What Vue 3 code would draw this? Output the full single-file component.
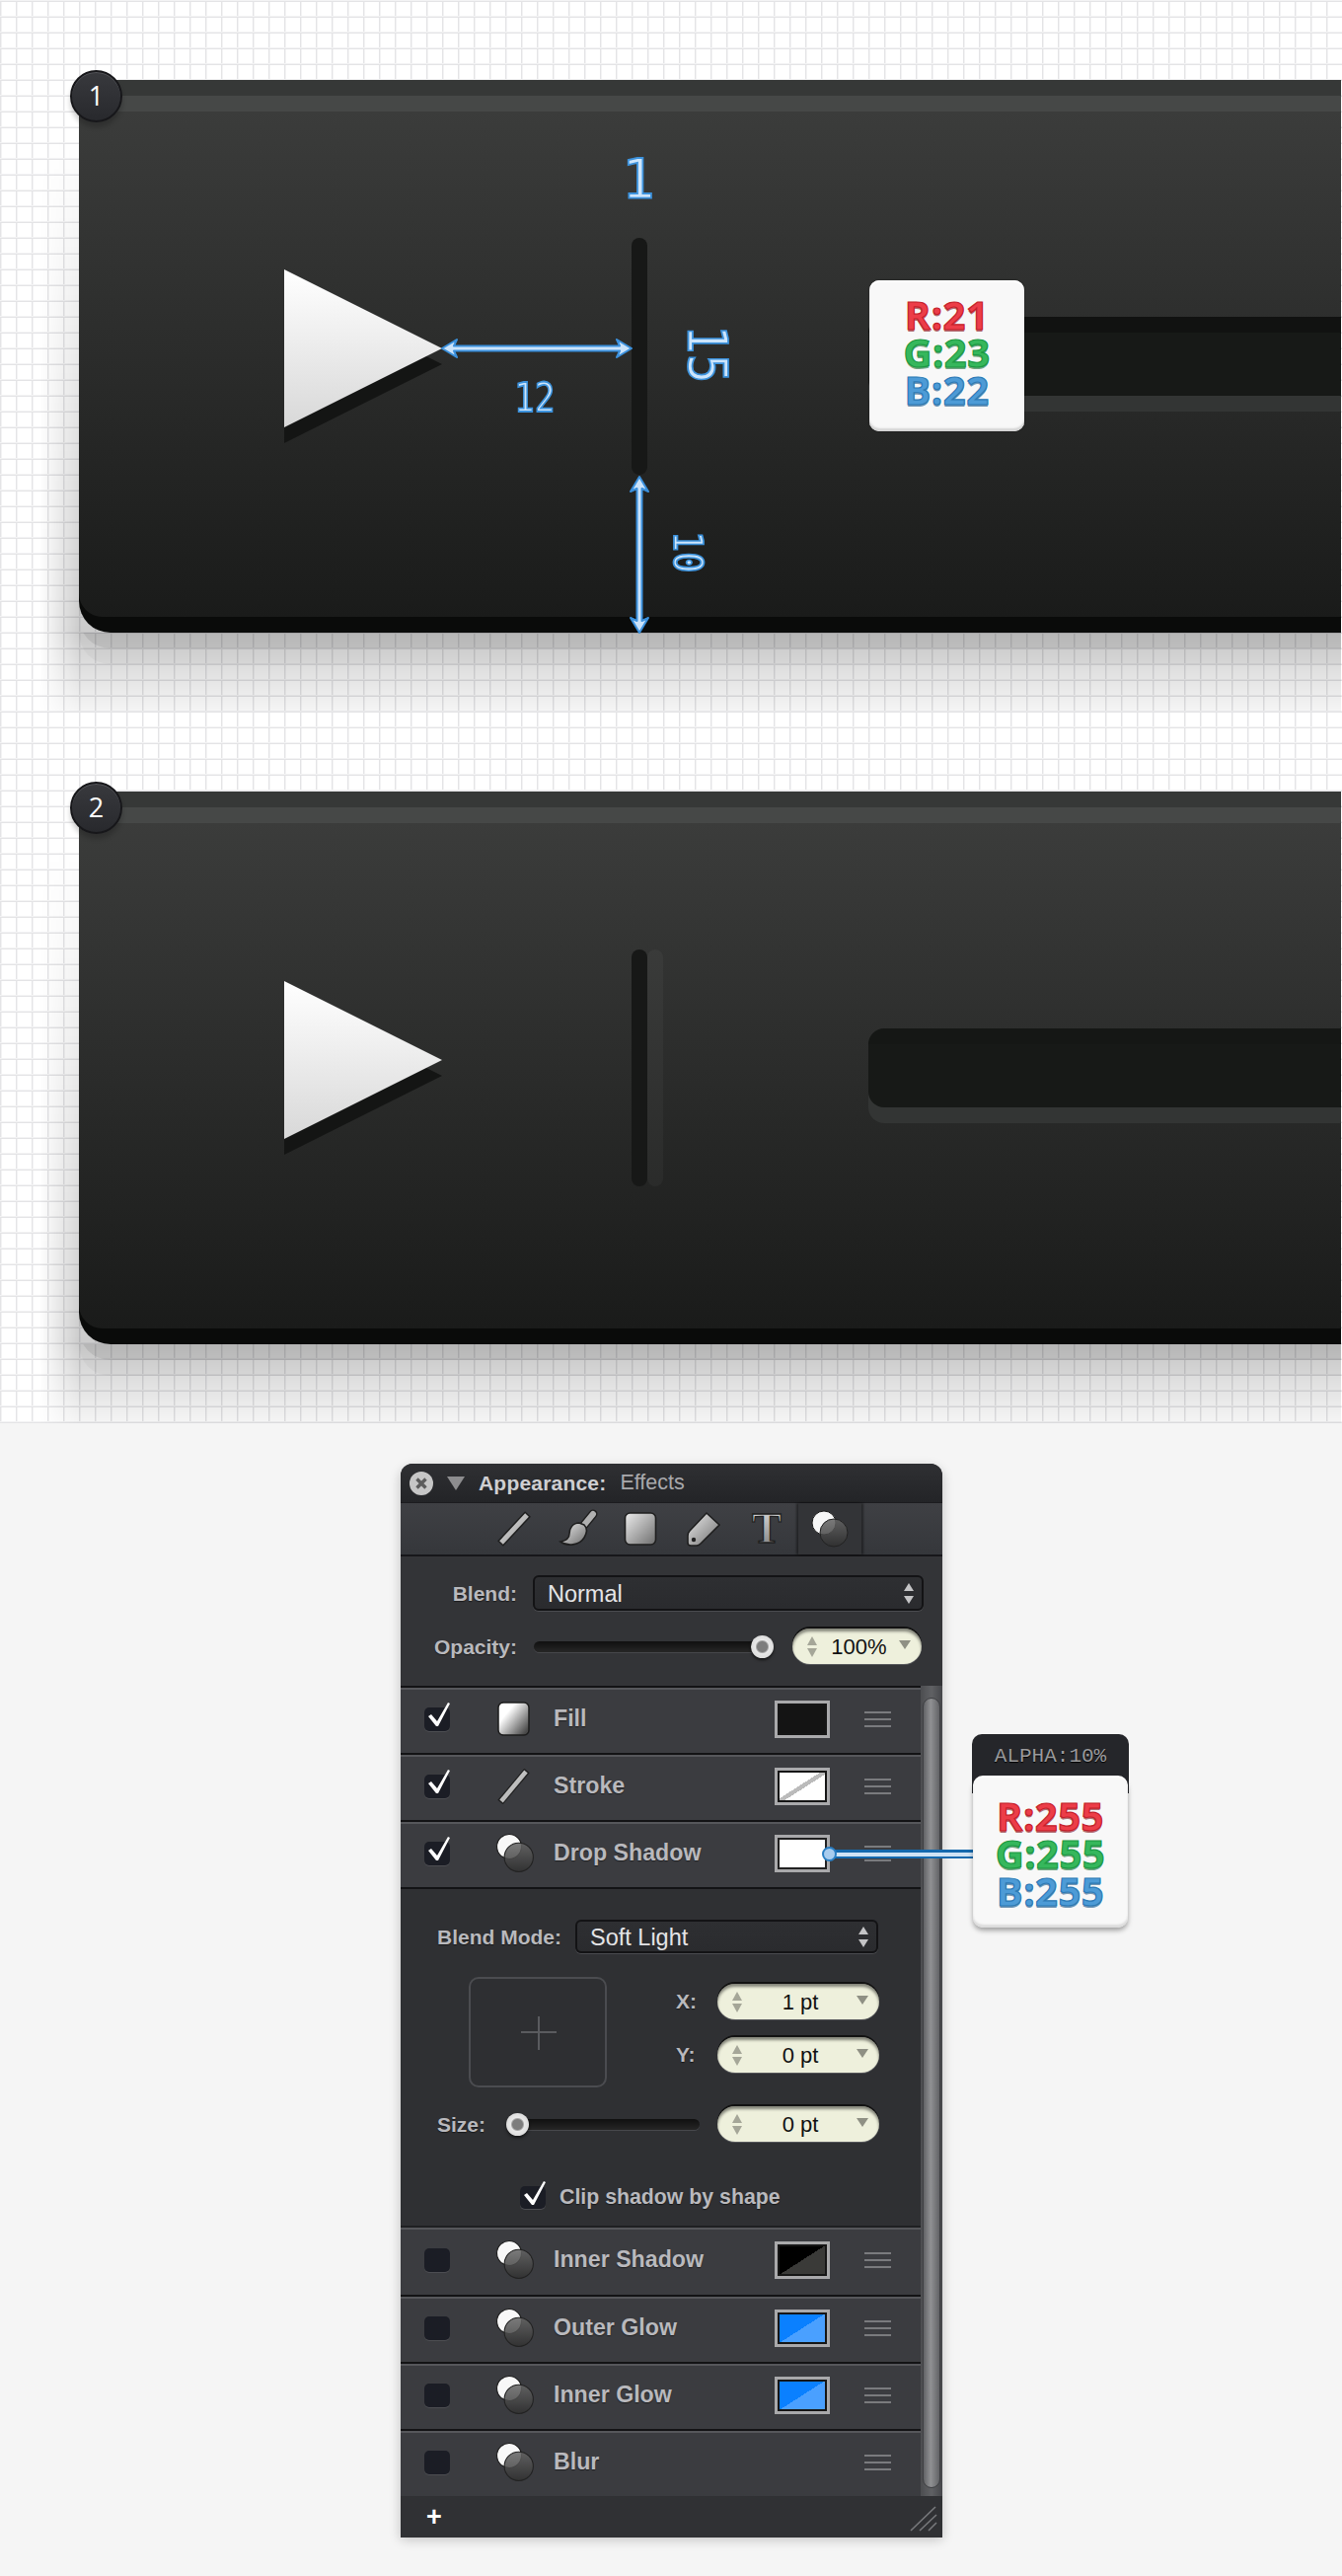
<template>
	<div class="page">
		<svg class="defs" width="0" height="0">
			<defs>
				<linearGradient id="g-tool" x1="0" y1="0" x2="1" y2="1">
					<stop offset="0" stop-color="#ececec" />
					<stop offset="1" stop-color="#6e6e6e" />
				</linearGradient>
				<linearGradient id="g-line" gradientUnits="userSpaceOnUse" x1="4" y1="4" x2="32" y2="32">
					<stop offset="0" stop-color="#d8d8d8" />
					<stop offset="1" stop-color="#a0a0a0" />
				</linearGradient>
				<linearGradient id="g-fill" x1="0.1" y1="0.2" x2="0.9" y2="0.9">
					<stop offset="0.2" stop-color="#ffffff" />
					<stop offset="1" stop-color="#4a4a4a" />
				</linearGradient>
				<linearGradient id="g-play" x1="0" y1="0" x2="0" y2="1">
					<stop offset="0" stop-color="#ffffff" />
					<stop offset="1" stop-color="#d8d8d8" />
				</linearGradient>
				<linearGradient id="g-orb" x1="0" y1="0" x2="0" y2="1">
					<stop offset="0" stop-color="#666666" />
					<stop offset="1" stop-color="#303030" />
				</linearGradient>
				<linearGradient id="g-t" x1="0" y1="0" x2="0" y2="1">
					<stop offset="0" stop-color="#e4e4e4" />
					<stop offset="1" stop-color="#7a7a7a" />
				</linearGradient>
			</defs>
		</svg>

		<section class="canvas">
			<div class="sheet">
				<div class="badge">1</div>
				<div class="panel">
					<div class="stripe-a"></div>
					<div class="stripe-b"></div>
					<div class="stage">
						<svg class="play" width="160" height="176" viewBox="0 0 160 176">
							<polygon points="0,16 160,96 0,176" fill="#141514" />
							<polygon points="0,0 160,80 0,160" fill="url(#g-play)" />
						</svg>
						<div class="bar"></div>
						<div class="slot"></div>
					</div>
				</div>
				<span class="dim dim-big dim-one">1</span>
				<span class="dim dim-small dim-twelve">12</span>
				<span class="dim dim-big dim-side dim-fifteen">15</span>
				<span class="dim dim-small dim-side dim-ten">10</span>
				<svg class="arrow-h" width="196" height="24" viewBox="0 0 196 24">
					<path class="arrow-path" d="M2,12 L17,3 L14,9.5 L182,9.5 L179,3 L194,12 L179,21 L182,14.5 L14,14.5 L17,21 Z" />
				</svg>
				<svg class="arrow-v" width="24" height="162" viewBox="0 0 24 162">
					<path class="arrow-path" d="M12,2 L3,17 L9.5,14 L9.5,148 L3,145 L12,160 L21,145 L14.5,148 L14.5,14 L21,17 Z" />
				</svg>
				<div class="rgb-card">
					<div class="rgb r">R:21</div>
					<div class="rgb g">G:23</div>
					<div class="rgb b">B:22</div>
				</div>
			</div>

			<div class="sheet sheet-two">
				<div class="badge">2</div>
				<div class="panel">
					<div class="stripe-a"></div>
					<div class="stripe-b"></div>
					<div class="stage">
						<svg class="play" width="160" height="176" viewBox="0 0 160 176">
							<polygon points="0,16 160,96 0,176" fill="#141514" />
							<polygon points="0,0 160,80 0,160" fill="url(#g-play)" />
						</svg>
						<div class="bar bar-lit"></div>
						<div class="slot slot-lit"></div>
					</div>
				</div>
			</div>
		</section>

		<section class="lower">
			<div class="inspector">
				<header class="title-bar">
					<svg class="close" width="24" height="24" viewBox="0 0 24 24">
						<circle cx="12" cy="12" r="12" fill="#c6c6c6" />
						<path d="M7.5 7.5 L16.5 16.5 M16.5 7.5 L7.5 16.5" stroke="#5c5c5c" stroke-width="3.4" />
					</svg>
					<i class="disclosure"></i>
					<strong class="title">Appearance:</strong>
					<span class="subtitle">Effects</span>
				</header>

				<nav class="toolbar">
					<div class="tool">
						<svg width="36" height="36" viewBox="0 0 36 36">
							<path d="M4 33 L32 3" stroke="#1f1f1f" stroke-width="8" />
							<path d="M5 32 L31 4" stroke="url(#g-line)" stroke-width="5" />
						</svg>
					</div>
					<div class="tool">
						<svg width="38" height="36" viewBox="0 0 38 36">
							<path d="M35 3 L26 14" stroke="#1f1f1f" stroke-width="9" stroke-linecap="round" />
							<path d="M35 3 L26 14" stroke="#b0b0b0" stroke-width="6" stroke-linecap="round" />
							<path d="M21 12 C14 12 11 18 11 23 C11 28 7 30 2 31 C9 36 21 35 26 27 C29 22 29 17 26 14 Z" fill="url(#g-tool)" stroke="#1f1f1f" stroke-width="1.6" />
						</svg>
					</div>
					<div class="tool">
						<svg width="34" height="36" viewBox="0 0 34 36">
							<rect x="1.5" y="2" width="31" height="32" rx="5" fill="url(#g-tool)" stroke="#1f1f1f" stroke-width="1.6" />
						</svg>
					</div>
					<div class="tool">
						<svg width="36" height="36" viewBox="0 0 36 36">
							<path d="M21 2 L34 14 L15 33 Q13 35 11 35 L5 35 Q2 35 2 32 L2 25 Q2 22 4 20 Z" fill="url(#g-tool)" stroke="#1f1f1f" stroke-width="1.6" />
							<circle cx="8" cy="29" r="2.2" fill="#222" />
						</svg>
					</div>
					<div class="tool">
						<svg width="40" height="42" viewBox="0 0 40 42">
							<text class="tool-t" x="20" y="35" text-anchor="middle" fill="url(#g-t)" stroke="#1f1f1f" stroke-width="1.3">T</text>
						</svg>
					</div>
					<div class="tool tool-on">
						<svg width="38" height="38" viewBox="0 0 38 38">
							<circle cx="13" cy="13" r="12" fill="#f6f6f6" stroke="#1b1b1b" stroke-width="1" />
							<circle cx="23" cy="23" r="14" fill="url(#g-orb)" fill-opacity="0.86" stroke="#222" stroke-width="1" />
						</svg>
					</div>
				</nav>

				<div class="global">
					<div class="line line-blend">
						<label class="label label-wide">Blend:</label>
						<div class="select select-main">
							<span>Normal</span>
							<i class="updown"><b></b><u></u></i>
						</div>
					</div>
					<div class="line line-opacity">
						<label class="label label-wide">Opacity:</label>
						<div class="track track-opacity"><i class="thumb thumb-end"></i></div>
						<div class="field field-short">
							<i class="stepper"><b></b><u></u></i>
							<span>100%</span>
							<i class="caret"></i>
						</div>
					</div>
				</div>

				<div class="list-wrap">
					<div class="list">
						<template v-for="row in rows" :key="row.name">
							<div class="row">
								<div class="check"><svg v-if="row.on" width="28" height="34" viewBox="0 0 28 34"><path d="M4 17 L7 15 L13 22 L24 3 L26 4 L14 27 L12 27 Z" /></svg></div>
								<div class="row-icon">
									<svg v-if="row.icon === 'fill'" width="36" height="36" viewBox="0 0 36 36">
										<rect x="1" y="1" width="31" height="33" rx="5" fill="url(#g-fill)" stroke="#1c1c1c" stroke-width="1.5" />
									</svg>
									<svg v-else-if="row.icon === 'stroke'" width="36" height="36" viewBox="0 0 36 36">
										<path d="M3 34 L30 2" stroke="#1f1f1f" stroke-width="7" />
										<path d="M4 33 L29 3" stroke="url(#g-line)" stroke-width="4.5" />
									</svg>
									<svg v-else class="orb" width="39" height="39" viewBox="0 0 36 36">
										<circle cx="12" cy="12" r="11.5" fill="#f8f8f8" stroke="#1b1b1b" stroke-width="1" />
										<circle cx="21" cy="22" r="13.5" fill="url(#g-orb)" fill-opacity="0.86" stroke="#222" stroke-width="1" />
									</svg>
								</div>
								<span class="row-name">{{row.name}}</span>
								<div v-if="row.swatch" class="swatch" :class="'swatch-' + row.swatch"></div>
								<div class="handle"><i></i><i></i><i></i></div>
							</div>
							<div v-if="row.name === 'Drop Shadow'" class="details">
								<div class="line line-mode">
									<label class="label label-low">Blend Mode:</label>
									<div class="select select-mode">
										<span>Soft Light</span>
										<i class="updown"><b></b><u></u></i>
									</div>
								</div>
								<div class="offset">
									<div class="pad"><i class="cross-h"></i><i class="cross-v"></i></div>
									<div class="offset-fields">
										<div class="line">
											<label class="label axis">X:</label>
											<div class="field">
												<i class="stepper"><b></b><u></u></i>
												<span>1 pt</span>
												<i class="caret"></i>
											</div>
										</div>
										<div class="line">
											<label class="label axis">Y:</label>
											<div class="field">
												<i class="stepper"><b></b><u></u></i>
												<span>0 pt</span>
												<i class="caret"></i>
											</div>
										</div>
									</div>
								</div>
								<div class="line line-size">
									<label class="label label-low">Size:</label>
									<div class="track track-size"><i class="thumb thumb-start"></i></div>
									<div class="field">
										<i class="stepper"><b></b><u></u></i>
										<span>0 pt</span>
										<i class="caret"></i>
									</div>
								</div>
								<div class="line line-clip">
									<div class="check check-small"><svg width="28" height="34" viewBox="0 0 28 34"><path d="M4 17 L7 15 L13 22 L24 3 L26 4 L14 27 L12 27 Z" /></svg></div>
									<span class="label clip-text">Clip shadow by shape</span>
								</div>
							</div>
						</template>
					</div>
					<div class="scrollbar"><div class="scroll-thumb"></div></div>
				</div>

				<footer class="footer">
					<span class="plus">+</span>
					<svg class="grip" width="28" height="26" viewBox="0 0 28 26">
						<path d="M1 25 L26 1 M10 25 L27 9 M19 25 L27 17" stroke="#77787b" stroke-width="1.6" />
					</svg>
				</footer>

				<div class="wire"><i class="wire-dot"></i></div>
				<div class="pop">
					<div class="pop-tab">ALPHA:10%</div>
					<div class="pop-card">
						<div class="rgb r">R:255</div>
						<div class="rgb g">G:255</div>
						<div class="rgb b">B:255</div>
					</div>
				</div>
			</div>
		</section>
	</div>
</template>

<script setup>
	const rows = [
		{ name: "Fill", on: true, icon: "fill", swatch: "black" },
		{ name: "Stroke", on: true, icon: "stroke", swatch: "none" },
		{ name: "Drop Shadow", on: true, icon: "shadow", swatch: "white" },
		{ name: "Inner Shadow", on: false, icon: "shadow", swatch: "split" },
		{ name: "Outer Glow", on: false, icon: "shadow", swatch: "blue" },
		{ name: "Inner Glow", on: false, icon: "shadow", swatch: "blue" },
		{ name: "Blur", on: false, icon: "shadow", swatch: null },
	];
</script>

<style>
	html, body
	{
		margin: 0;
		background: #f5f5f5;
	}
</style>

<style scoped>
	.page
	{
		width: 1360px;
		height: 2610px;
		overflow: hidden;
		font-family: "Liberation Sans", Arial, sans-serif;
	}

	.defs
	{
		position: absolute;
	}

	.canvas
	{
		height: 1442px;
		box-sizing: border-box;
		padding: 81px 1px 0 80px;
		background-color: #fff;
		background-image:
			linear-gradient(#f3f3f4 1px, #e4e4e6 1px, #e4e4e6 2px, transparent 2px),
			linear-gradient(90deg, #e4e4e6 1px, #f3f3f4 1px, #f3f3f4 2px, transparent 2px);
		background-size: 16px 16px;
	}

	.sheet
	{
		position: relative;
		height: 560px;
	}

	.sheet-two
	{
		margin-top: 161px;
	}

	.sheet::before
	{
		content: "";
		position: absolute;
		left: -40px;
		right: 0;
		top: 56px;
		bottom: -80px;
		background: linear-gradient(rgba(0, 0, 0, 0), rgba(0, 0, 0, .2) 86%, rgba(0, 0, 0, .04));
		-webkit-mask-image: linear-gradient(90deg, transparent, #000 40px);
		mask-image: linear-gradient(90deg, transparent, #000 40px);
	}

	.panel
	{
		position: relative;
		height: 560px;
		display: flex;
		flex-direction: column;
		overflow: hidden;
		background: #0a0b0a;
		border-radius: 32px 0 0 32px;
	}

	.sheet::after
	{
		content: "";
		position: absolute;
		left: 0;
		right: 0;
		top: 0;
		height: 560px;
		border-radius: 32px 0 0 32px;
		box-shadow: 0 16px 0 rgba(0, 0, 0, .08), 0 32px 0 rgba(0, 0, 0, .03);
		pointer-events: none;
		clip-path: inset(100% 0 -40px 0);
	}

	.stripe-a
	{
		height: 16px;
		background: #363837;
	}

	.stripe-b
	{
		height: 16px;
		background: #464847;
	}

	.stage
	{
		flex: 1;
		margin-bottom: 16px;
		display: flex;
		align-items: flex-start;
		background: linear-gradient(#3b3c3b, #1a1b1a);
		border-radius: 0 0 0 24px;
	}

	.play
	{
		margin: 160px 0 0 208px;
		flex: none;
	}

	.bar
	{
		flex: none;
		margin: 128px 0 0 192px;
		width: 16px;
		height: 240px;
		border-radius: 8px;
		background: #171817;
	}

	.bar-lit
	{
		box-shadow: 16px 0 0 rgba(255, 255, 255, .035);
	}

	.slot
	{
		flex: 1;
		margin: 208px 0 0 224px;
		height: 80px;
		box-sizing: border-box;
		border-top: 16px solid #111211;
		background: #171917;
		border-radius: 16px 0 0 16px;
		box-shadow: 0 16px 0 #333534;
	}

	.slot-lit
	{
		border-top-color: #151715;
	}

	.badge
	{
		position: absolute;
		z-index: 3;
		left: -9px;
		top: -10px;
		width: 53px;
		height: 53px;
		box-sizing: border-box;
		border: 2px solid #17171a;
		border-radius: 50%;
		background: linear-gradient(#38393d, #28292d);
		box-shadow: 0 5px 5px rgba(0, 0, 0, .2), inset 0 1px 0 #55565a;
		color: #fff;
		font: 27px/47px "Open Sans", sans-serif;
		text-align: center;
	}

	.dim
	{
		position: absolute;
		z-index: 2;
		font-family: "DejaVu Sans Mono", monospace;
		line-height: 1;
		color: #cde5fb;
		-webkit-text-stroke: 1.8px #3c92dc;
		transform-origin: 0 0;
		white-space: nowrap;
	}

	.dim-big
	{
		font-size: 56px;
	}

	.dim-small
	{
		font-size: 41px;
	}

	.dim-one
	{
		left: 550px;
		top: 72px;
	}

	.dim-twelve
	{
		left: 441px;
		top: 302px;
		transform: scaleX(.84);
	}

	.dim-side
	{
		writing-mode: vertical-rl;
	}

	.dim-fifteen
	{
		left: 609px;
		top: 248px;
		transform: scaleY(.88);
	}

	.dim-ten
	{
		left: 596px;
		top: 457px;
		transform: scaleY(.86);
	}

	.arrow-h
	{
		position: absolute;
		z-index: 2;
		left: 366px;
		top: 260px;
	}

	.arrow-v
	{
		position: absolute;
		z-index: 2;
		left: 556px;
		top: 400px;
	}

	.arrow-path
	{
		fill: #cbe3fa;
		stroke: #3b90dc;
		stroke-width: 2;
		stroke-linejoin: round;
	}

	.rgb-card
	{
		position: absolute;
		z-index: 2;
		left: 801px;
		top: 203px;
		width: 157px;
		height: 153px;
		box-sizing: border-box;
		padding-top: 16px;
		border-radius: 10px;
		background: #f8f8f8;
		box-shadow: inset 0 -3px 2px #d4d4d4, inset 0 2px 1px #fff, 0 0 2px rgba(0, 0, 0, .4);
		text-align: center;
	}

	.rgb
	{
		font: 700 40px/38px "Open Sans", sans-serif;
		letter-spacing: .5px;
	}

	.rgb.r
	{
		color: #ec3d48;
		-webkit-text-stroke: 1.2px #c51f2b;
		text-shadow: 0 2px 0 rgba(130, 20, 30, .6);
	}

	.rgb.g
	{
		color: #36b75c;
		-webkit-text-stroke: 1.2px #1c9a43;
		text-shadow: 0 2px 0 rgba(20, 110, 50, .6);
	}

	.rgb.b
	{
		color: #4d9bd6;
		-webkit-text-stroke: 1.2px #2c7ab6;
		text-shadow: 0 2px 0 rgba(25, 85, 135, .6);
	}

	.lower
	{
		height: 1168px;
		box-sizing: border-box;
		padding: 41px 0 0 406px;
		background: #f5f5f5;
	}

	.inspector
	{
		position: relative;
		width: 549px;
		height: 1086px;
		display: flex;
		flex-direction: column;
		border-radius: 12px 12px 0 0;
		background: #333437;
		box-shadow: 0 4px 12px rgba(0, 0, 0, .22);
	}

	.title-bar
	{
		height: 40px;
		flex: none;
		display: flex;
		align-items: center;
		padding-left: 9px;
		box-sizing: border-box;
		border-radius: 12px 12px 0 0;
		background: linear-gradient(#2f3033, #232427);
		border-bottom: 1px solid #1c1c1f;
	}

	.close
	{
		flex: none;
	}

	.disclosure
	{
		margin-left: 14px;
		width: 0;
		height: 0;
		border-left: 9px solid transparent;
		border-right: 9px solid transparent;
		border-top: 14px solid #8d8d8f;
	}

	.title
	{
		margin-left: 14px;
		font-size: 21px;
		color: #cfcfd2;
		letter-spacing: .2px;
	}

	.subtitle
	{
		margin-left: 14px;
		font-size: 21.5px;
		color: #a9a9ac;
	}

	.toolbar
	{
		height: 54px;
		flex: none;
		box-sizing: border-box;
		display: flex;
		padding-left: 83px;
		background: linear-gradient(#3f4044, #35373b);
		border-bottom: 2px solid #17171a;
	}

	.tool
	{
		width: 64px;
		display: flex;
		align-items: center;
		justify-content: center;
	}

	.tool svg
	{
		overflow: visible;
	}

	.tool-on
	{
		background: #333437;
		box-shadow: -2px 0 2px rgba(0, 0, 0, .4), 2px 0 2px rgba(0, 0, 0, .4);
	}

	.tool-t
	{
		font: 700 45px "Liberation Serif", serif;
	}

	.global
	{
		height: 131px;
		flex: none;
		box-sizing: border-box;
		padding-top: 19px;
	}

	.line
	{
		display: flex;
		align-items: center;
	}

	.line-blend
	{
		height: 36px;
	}

	.line-opacity
	{
		height: 36px;
		margin-top: 18px;
	}

	.label
	{
		font-size: 21px;
		font-weight: 700;
		color: #b9b9bd;
		text-shadow: 0 1px 1px rgba(0, 0, 0, .5);
		white-space: nowrap;
	}

	.label-wide
	{
		width: 118px;
		text-align: right;
		flex: none;
		padding-top: 2px;
	}

	.label-low
	{
		padding-top: 2px;
	}

	.select
	{
		box-sizing: border-box;
		display: flex;
		align-items: center;
		justify-content: space-between;
		border: 2px solid #131315;
		border-radius: 6px;
		background: linear-gradient(#2e2f32, #2a2b2e);
		box-shadow: 0 1px 0 #4a4b4f;
		color: #e4e4e6;
		font-size: 23.5px;
		padding: 0 8px 0 13px;
	}

	.select span
	{
		padding-top: 2px;
	}

	.select-main
	{
		margin-left: 16px;
		width: 396px;
		height: 36px;
	}

	.updown
	{
		display: flex;
		flex-direction: column;
		gap: 5px;
	}

	.updown b, .updown u, .stepper b, .stepper u
	{
		display: block;
		width: 0;
		height: 0;
		border-left: 5px solid transparent;
		border-right: 5px solid transparent;
	}

	.updown b
	{
		border-bottom: 8px solid #c4c4c6;
	}

	.updown u
	{
		border-top: 8px solid #c4c4c6;
	}

	.track
	{
		position: relative;
		height: 11px;
		border-radius: 6px;
		background: linear-gradient(#101010, #262626);
		box-shadow: 0 1px 0 #47484c;
	}

	.track-opacity
	{
		margin-left: 17px;
		width: 231px;
	}

	.track-size
	{
		margin-left: 21px;
		width: 196px;
	}

	.thumb
	{
		position: absolute;
		top: -6px;
		width: 23px;
		height: 23px;
		box-sizing: border-box;
		border-radius: 50%;
		background: radial-gradient(circle, #7d7d7d 0 5px, #a8a8a8 6px, #e8e8e8 7px, #d0d0d0);
		box-shadow: 0 2px 3px rgba(0, 0, 0, .6);
	}

	.thumb-end
	{
		right: -12px;
	}

	.thumb-start
	{
		left: 0;
	}

	.field
	{
		box-sizing: border-box;
		width: 164px;
		height: 36px;
		flex: none;
		display: flex;
		align-items: center;
		padding: 0 11px 0 13px;
		border-radius: 18px;
		background: #eef0dc;
		box-shadow: 0 -2px 0 #121212, inset 0 3px 3px rgba(0, 0, 0, .45), 0 1px 0 #55565a;
		color: #111;
		font-size: 22px;
	}

	.field span
	{
		flex: 1;
		text-align: center;
		padding-top: 2px;
	}

	.field-short
	{
		margin-left: 31px;
		width: 131px;
	}

	.stepper
	{
		width: 14px;
		display: flex;
		flex-direction: column;
		align-items: center;
		gap: 3px;
	}

	.stepper b
	{
		border-bottom: 9px solid #a5a698;
	}

	.stepper u
	{
		border-top: 9px solid #a5a698;
	}

	.caret
	{
		width: 0;
		height: 0;
		border-left: 6px solid transparent;
		border-right: 6px solid transparent;
		border-top: 9px solid #8f9084;
		margin-top: -3px;
	}

	.list-wrap
	{
		position: relative;
		flex: 1;
		display: flex;
	}

	.list
	{
		width: 527px;
		flex: none;
	}

	.row
	{
		height: 68px;
		box-sizing: border-box;
		display: flex;
		align-items: center;
		padding: 0 0 3px 24px;
		background: #3b3c40;
		border-top: 2px solid #131315;
		box-shadow: inset 0 2px 0 #56575b;
	}

	.details + .row
	{
		border-top: 0;
	}

	.check
	{
		position: relative;
		flex: none;
		width: 26px;
		height: 24px;
		border-radius: 5px;
		background: #1b1d25;
		box-shadow: 0 1px 0 #4d4e52;
	}

	.check svg
	{
		position: absolute;
		left: 0;
		top: -8px;
		fill: #fff;
	}

	.row-icon
	{
		flex: none;
		margin-left: 48px;
		width: 36px;
		height: 36px;
	}

	.orb
	{
		margin: -2px 0 0 -1px;
		overflow: visible;
	}

	.row-name
	{
		margin-left: 21px;
		font-size: 23.2px;
		font-weight: 700;
		color: #b9b9bd;
		text-shadow: 0 1px 1px rgba(0, 0, 0, .5);
		white-space: nowrap;
	}

	.swatch
	{
		position: absolute;
		left: 379px;
		box-sizing: border-box;
		width: 56px;
		height: 38px;
		border: 3px solid #a9a9ab;
		box-shadow: inset 0 0 0 2px #161616;
	}

	.swatch-black
	{
		background: #141414;
	}

	.swatch-white
	{
		background: #fff;
		box-shadow: inset 0 0 0 2px #222;
	}

	.swatch-none
	{
		background: linear-gradient(to bottom right, #fff 46%, #bbb 46%, #bbb 54%, #fff 54%);
	}

	.swatch-split
	{
		background: linear-gradient(to bottom right, #000 50%, #3a3a38 50%);
	}

	.swatch-blue
	{
		background: linear-gradient(to bottom right, #0a80ff 50%, #4aa0ff 50%);
	}

	.handle
	{
		position: absolute;
		left: 470px;
		width: 27px;
		display: flex;
		flex-direction: column;
		gap: 5px;
	}

	.handle i
	{
		display: block;
		height: 2px;
		background: #7a7b7e;
	}

	.details
	{
		height: 345px;
		box-sizing: border-box;
		padding-top: 31px;
		background: #2f3033;
		border-top: 2px solid #131315;
		border-bottom: 2px solid #1f2022;
	}

	.line-mode
	{
		height: 34px;
		padding-left: 37px;
	}

	.select-mode
	{
		margin-left: 14px;
		width: 307px;
		height: 34px;
	}

	.offset
	{
		margin-top: 24px;
		display: flex;
		padding-left: 69px;
	}

	.pad
	{
		position: relative;
		flex: none;
		box-sizing: border-box;
		width: 140px;
		height: 112px;
		border: 2px solid #4b4c50;
		border-radius: 10px;
		background: #2e2f32;
	}

	.cross-h
	{
		position: absolute;
		left: 51px;
		top: 53px;
		width: 36px;
		height: 2px;
		background: #5a5b5f;
	}

	.cross-v
	{
		position: absolute;
		left: 68px;
		top: 38px;
		width: 2px;
		height: 34px;
		background: #5a5b5f;
	}

	.offset-fields
	{
		margin-left: 70px;
		padding-top: 7px;
		display: flex;
		flex-direction: column;
		gap: 18px;
	}

	.axis
	{
		width: 42px;
		flex: none;
	}

	.line-size
	{
		margin-top: 19px;
		padding-left: 37px;
	}

	.line-size .track-size
	{
		margin-left: 21px;
		margin-right: 18px;
	}

	.line-clip
	{
		margin-top: 44px;
		padding-left: 121px;
	}

	.check-small
	{
		height: 23px;
	}

	.clip-text
	{
		margin-left: 14px;
		font-size: 21.3px;
	}

	.scrollbar
	{
		flex: 1;
		box-sizing: border-box;
		padding: 12px 2px 8px;
		background: linear-gradient(90deg, #4c4d50, #606164 50%, #45464a);
	}

	.scroll-thumb
	{
		height: 100%;
		box-sizing: border-box;
		border-radius: 9px;
		border: 1px solid #3e3f42;
		background: linear-gradient(90deg, #626366, #909193 45%, #626366);
	}

	.footer
	{
		height: 42px;
		flex: none;
		position: relative;
		display: flex;
		align-items: center;
		justify-content: space-between;
		padding: 0 5px 0 26px;
		background: #303134;
	}

	.plus
	{
		color: #fff;
		font-size: 27px;
		font-weight: 700;
		line-height: 1;
	}

	.grip
	{
		margin-top: 4px;
	}

	.wire
	{
		position: absolute;
		left: 434px;
		top: 391px;
		width: 146px;
		height: 9px;
		box-sizing: border-box;
		border-top: 3px solid #1469ae;
		border-bottom: 2px solid #1469ae;
		background: #cfe3f5;
	}

	.wire-dot
	{
		position: absolute;
		left: -7px;
		top: -6px;
		width: 15px;
		height: 15px;
		box-sizing: border-box;
		border: 2px solid #2a7fc4;
		border-radius: 50%;
		background: #a8ccee;
	}

	.pop
	{
		position: absolute;
		left: 579px;
		top: 274px;
		width: 159px;
	}

	.pop-tab
	{
		height: 60px;
		box-sizing: border-box;
		padding-top: 10px;
		border-radius: 10px 10px 0 0;
		background: #25262a;
		color: #9a9a9c;
		font: 21px/26px "Liberation Mono", monospace;
		text-align: center;
		text-shadow: 0 1px 1px #000;
	}

	.pop-card
	{
		position: relative;
		margin: -16px 1px 0;
		height: 152px;
		box-sizing: border-box;
		padding-top: 20px;
		border-radius: 10px;
		background: #f8f8f8;
		box-shadow: inset 0 -3px 2px #dcdcdc, 0 -2px 0 #fff, 0 3px 5px rgba(0, 0, 0, .35);
		text-align: center;
	}
</style>
